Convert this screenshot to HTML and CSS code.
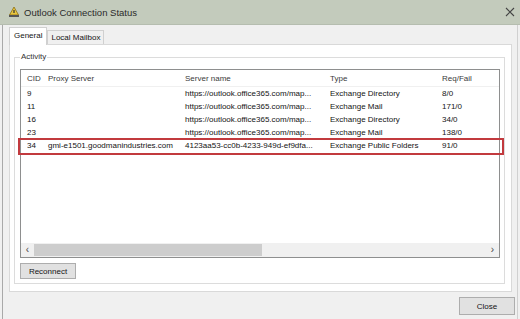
FILE: index.html
```html
<!DOCTYPE html>
<html>
<head>
<meta charset="utf-8">
<link rel="stylesheet" href="styles.css">
</head>
<body>
<div class="window">
  <div class="titlebar">
    <svg class="title-icon" viewBox="0 0 12 12" width="12" height="12">
      <path d="M6 1 L10.5 9 L1.5 9 Z" fill="#e8c640" stroke="#8a6d10" stroke-width="0.8"/>
      <rect x="1" y="9" width="10" height="2" fill="#555"/>
      <rect x="5.4" y="4" width="1.2" height="3" fill="#333"/>
    </svg>
    <span class="title">Outlook Connection Status</span>
    <svg class="close-x" viewBox="0 0 10 10" width="10" height="10">
      <path d="M1 1 L9 9 M9 1 L1 9" stroke="#444" stroke-width="1.1" fill="none"/>
    </svg>
  </div>
  <div class="body">
    <div class="tabs">
      <div class="tab active">General</div>
      <div class="tab">Local Mailbox</div>
    </div>
    <div class="panel">
      <div class="group">
        <span class="group-label">Activity</span>
        <div class="listview">
          <div class="lv-head">
            <span class="c1">CID</span><span class="c2">Proxy Server</span><span class="c3">Server name</span><span class="c4">Type</span><span class="c5">Req/Fail</span>
          </div>
          <div class="lv-rows">
            <div class="row"><span class="c1">9</span><span class="c2"></span><span class="c3">https://outlook.office365.com/map...</span><span class="c4">Exchange Directory</span><span class="c5">8/0</span></div>
            <div class="row"><span class="c1">11</span><span class="c2"></span><span class="c3">https://outlook.office365.com/map...</span><span class="c4">Exchange Mail</span><span class="c5">171/0</span></div>
            <div class="row"><span class="c1">16</span><span class="c2"></span><span class="c3">https://outlook.office365.com/map...</span><span class="c4">Exchange Directory</span><span class="c5">34/0</span></div>
            <div class="row"><span class="c1">23</span><span class="c2"></span><span class="c3">https://outlook.office365.com/map...</span><span class="c4">Exchange Mail</span><span class="c5">138/0</span></div>
            <div class="row"><span class="c1">34</span><span class="c2">gmi-e1501.goodmanindustries.com</span><span class="c3">4123aa53-cc0b-4233-949d-ef9dfa...</span><span class="c4">Exchange Public Folders</span><span class="c5">91/0</span></div>
          </div>
          <div class="hscroll">
            <span class="arrow">&lsaquo;</span>
            <div class="track"><div class="thumb"></div></div>
            <span class="arrow">&rsaquo;</span>
          </div>
          <div class="highlight"></div>
        </div>
        <div class="btn-row"><button class="btn">Reconnect</button></div>
      </div>
    </div>
    <div class="footer"><button class="btn close-btn">Close</button></div>
  </div>
</div>
</body>
</html>
```

FILE: styles.css
```css
* { box-sizing: border-box; }
html, body { margin: 0; padding: 0; }
body {
  width: 520px;
  height: 319px;
  overflow: hidden;
  background: #f0f0f0;
  font-family: "Liberation Sans", Arial, sans-serif;
  font-size: 8px;
  color: #141414;
}
.window { width: 520px; height: 319px; display: flex; flex-direction: column; }
.titlebar {
  height: 25px;
  background: #c3cbbc;
  display: flex;
  align-items: center;
  padding: 0 5px 0 8px;
  border-bottom: 1px solid #b5bdaf;
}
.title-icon { margin-right: 4px; flex: none; }
.title { flex: 1; font-size: 9.5px; color: #2a2a2a; }
.close-x { flex: none; }
.body {
  flex: 1;
  margin-left: 2px;
  margin-right: 2px;
  border-left: 1px solid #a9a9a9;
  border-right: 1px solid #d0d0d0;
  display: flex;
  flex-direction: column;
  padding: 2px 5px 0 6px;
}
.tabs { display: flex; align-items: flex-end; height: 17px; }
.tab {
  height: 14px;
  padding: 0 3px;
  border: 1px solid #d0d0d0;
  border-bottom: none;
  background: #f0f0f0;
  line-height: 13px;
  color: #141414;
}
.tab.active {
  height: 18px;
  background: #fff;
  margin-bottom: -1px;
  padding: 0 4px;
  line-height: 16px;
  position: relative;
  z-index: 1;
}
.panel {
  height: 248px;
  background: #fff;
  border: 1px solid #d9d9d9;
  padding: 12px 6px 8px 4px;
}
.group {
  position: relative;
  border: 1px solid #dcdcdc;
  height: 227px;
  padding: 11px 4px 4px 5px;
}
.group-label {
  position: absolute;
  top: -6px;
  left: 5px;
  background: #fff;
  padding: 0 1px;
  line-height: 10px;
  color: #333;
}
.listview {
  position: relative;
  height: 189px;
  border: 1px solid #8e8f8f;
  display: flex;
  flex-direction: column;
}
.lv-head, .row { display: flex; }
.lv-head { height: 17px; align-items: center; border-bottom: 1px solid #f0f0f0; color: #3a3a3a; }
.row { height: 13px; align-items: center; }
.lv-rows { flex: 1; }
.c1 { width: 23px; padding-left: 6px; flex: none; }
.c2 { width: 137px; padding-left: 4px; flex: none; }
.c3 { width: 145px; padding-left: 4px; flex: none; white-space: nowrap; }
.c4 { width: 112px; padding-left: 4px; flex: none; }
.c5 { flex: 1; padding-left: 4px; }
.hscroll {
  height: 14px;
  display: flex;
  align-items: center;
  background: #f0f0f0;
}
.arrow { width: 13px; text-align: center; font-size: 10px; line-height: 12px; color: #444; flex: none; }
.track { flex: 1; height: 12px; }
.thumb { width: 228px; height: 12px; background: #cdcdcd; }
.highlight {
  position: absolute;
  left: -3px;
  right: -5px;
  top: 68px;
  height: 17px;
  border: 2px solid #c23a3e;
}
.btn-row { margin-top: 5px; }
.btn {
  font-family: inherit;
  font-size: 8px;
  color: #141414;
  background: #e1e1e1;
  border: 1px solid #adadad;
  height: 16px;
  width: 56px;
  padding: 0;
  margin: 0;
}
.footer {
  flex: 1;
  display: flex;
  justify-content: flex-end;
  align-items: flex-start;
  padding-top: 5px;
  margin-right: -3px;
}
.close-btn { width: 56px; height: 18px; }
```
